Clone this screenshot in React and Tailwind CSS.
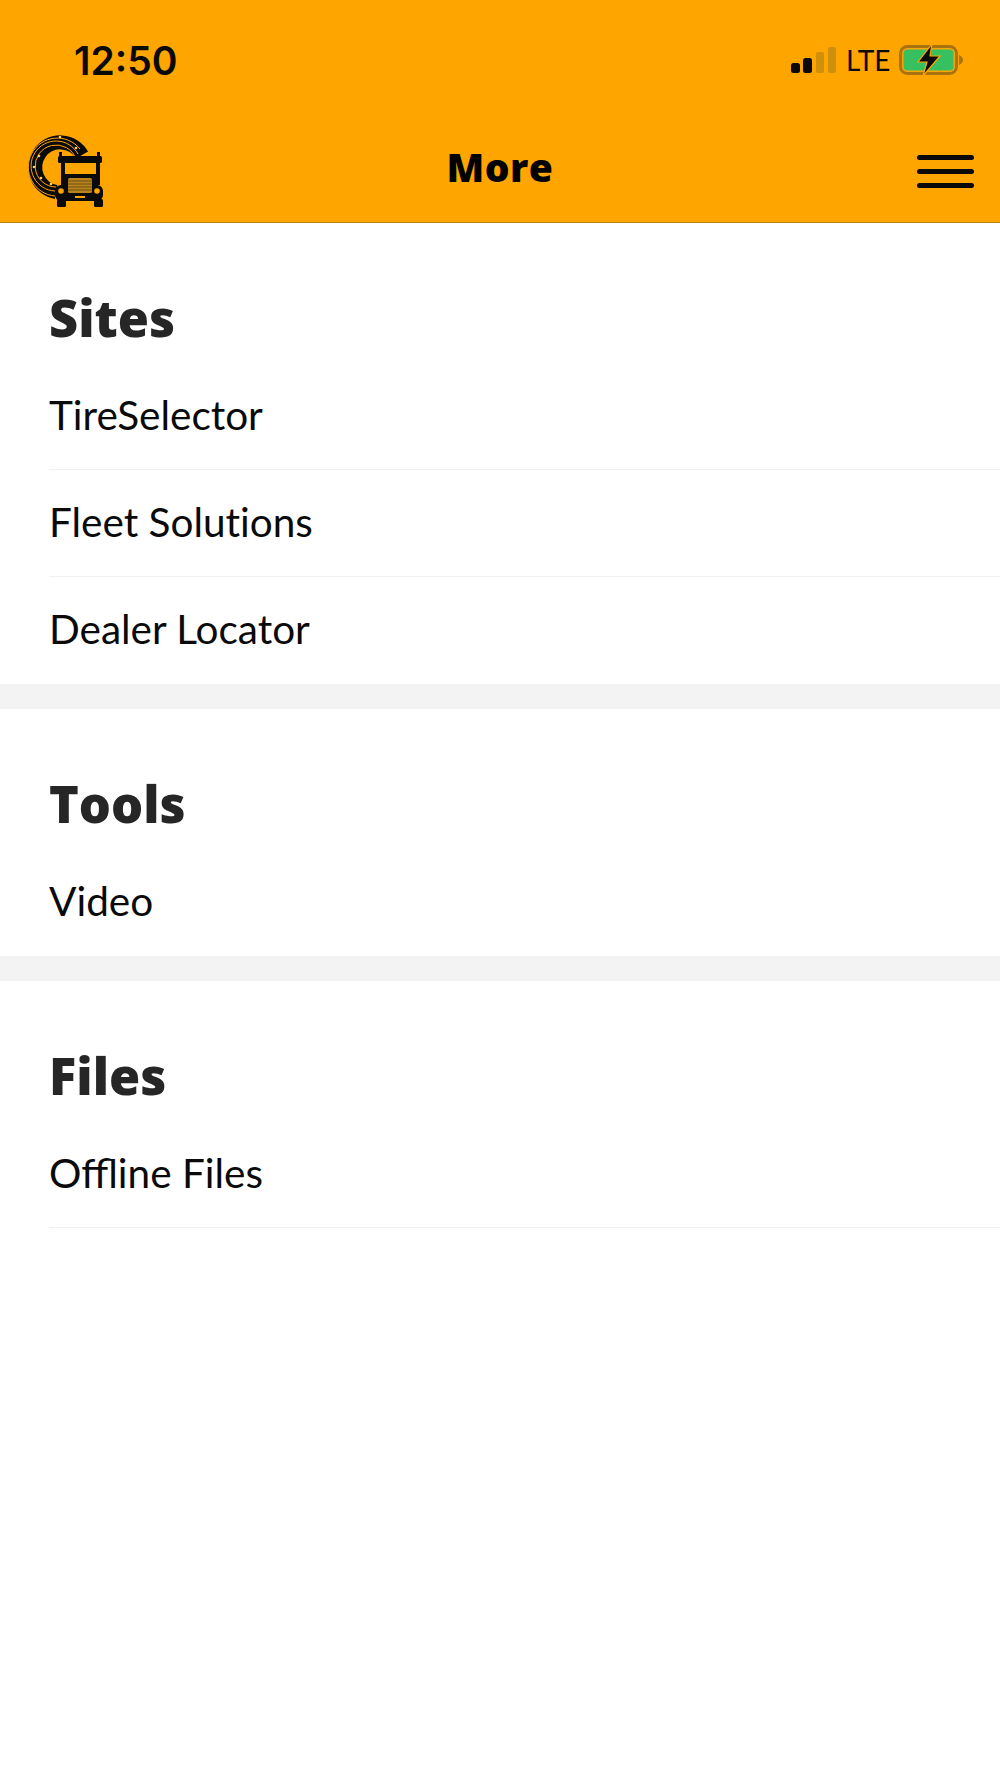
import React from "react";

const SECTIONS = [
  { title: "Sites", items: ["TireSelector", "Fleet Solutions", "Dealer Locator"] },
  { title: "Tools", items: ["Video"] },
  { title: "Files", items: ["Offline Files"] },
];

function TruckLogo() {
  return (
    <svg width="80" height="78" viewBox="0 0 80 78" className="block">
      {/* tire track arc */}
      <path d="M56 25 A 25 25 0 1 0 30 62" fill="none" stroke="#0a0a0a" strokeWidth="14" />
      <path d="M54 19 A 29 29 0 1 0 29 66" fill="none" stroke="#ffa500" strokeWidth="1" />
      <path d="M52 24 A 25 25 0 1 0 29 61" fill="none" stroke="#ffa500" strokeWidth="1" />
      <path d="M50 29 A 21 21 0 1 0 30 57" fill="none" stroke="#ffa500" strokeWidth="1" />
      <circle cx="34" cy="7" r="1.300" fill="#ffd060" />
      <circle cx="50" cy="18" r="1.300" fill="#ffd060" />
      <circle cx="13" cy="26" r="1.300" fill="#ffd060" />
      <circle cx="15" cy="48" r="1.300" fill="#ffd060" />
      <circle cx="25" cy="54" r="1.300" fill="#ffd060" />
      <circle cx="8" cy="37" r="1.300" fill="#ffd060" />
      {/* truck */}
      <rect x="33" y="22" width="3" height="6" fill="#0a0a0a" />
      <rect x="71" y="22" width="3" height="6" fill="#0a0a0a" />
      <rect x="32" y="26" width="44" height="7" rx="1.500" fill="#0a0a0a" />
      <rect x="35" y="33" width="4" height="22" fill="#0a0a0a" />
      <rect x="70" y="33" width="4" height="22" fill="#0a0a0a" />
      <rect x="36" y="44" width="36" height="26" fill="#0a0a0a" />
      <rect x="29" y="55" width="48" height="16" rx="6" fill="#0a0a0a" />
      <rect x="42" y="48" width="24" height="15" rx="1.500" fill="#b8841b" />
      <path d="M42 51h24M42 54h24M42 57h24M42 60h24" stroke="#5a4312" strokeWidth="0.8" />
      <circle cx="35" cy="61" r="2.800" fill="#ffa500" />
      <circle cx="71" cy="61" r="2.800" fill="#ffa500" />
      <rect x="49" y="66" width="10" height="2" fill="#ffa500" />
      <rect x="31" y="69" width="9" height="8" rx="1.500" fill="#0a0a0a" />
      <rect x="68" y="69" width="9" height="8" rx="1.500" fill="#0a0a0a" />
    </svg>
  );
}

function StatusIcons() {
  return (
    <div className="flex items-center">
      <svg width="46" height="26" viewBox="0 0 46 26" className="block">
        <rect x="0" y="16" width="9" height="10" rx="2.500" fill="#0a0a0a" />
        <rect x="12" y="11" width="9" height="15" rx="2.500" fill="#0a0a0a" />
        <rect x="25" y="5" width="8" height="21" rx="2" fill="#cf8f0a" />
        <rect x="37" y="0" width="8" height="26" rx="2" fill="#cf8f0a" />
      </svg>
      <span className="ml-[9px] w-[44px] text-[28px] leading-none text-[#0a0a0a] font-['Lato',sans-serif]">LTE</span>
      <svg width="64" height="32" viewBox="0 0 64 32" className="block ml-[9px]">
        <rect x="1.500" y="2.500" width="56" height="27" rx="7" fill="none" stroke="#a8720e" strokeWidth="3" />
        <rect x="4.500" y="5.500" width="50" height="21" rx="4" fill="#36c060" />
        <path d="M60 11 Q64 13 64 16 Q64 19 60 21 Z" fill="#a8720e" />
        <path d="M33 0 L19 18 H28 L24 32 L41 12 H31 Z" fill="#0a0a0a" stroke="#ffa500" strokeWidth="1.200" />
      </svg>
    </div>
  );
}

function Header() {
  return (
    <header className="h-[223px] bg-[#ffa500] border-b border-[#b98514] flex flex-col">
      <div className="flex items-center justify-between h-[120px] pl-[74px] pr-[37px]">
        <span className="text-[39px] leading-none text-[#0a0a0a] font-['Inter',sans-serif] font-semibold">12:50</span>
        <StatusIcons />
      </div>
      <div className="flex-1 flex items-start justify-between pl-[26px] pr-[26px] pt-[10px] relative">
        <TruckLogo />
        <h1 className="absolute left-0 right-0 top-[23px] text-center text-[39px] leading-[48px] font-extrabold tracking-[0.5px] text-black font-['Open_Sans',sans-serif]">More</h1>
        <div className="mt-[25px] flex flex-col gap-[9px]">
          <div className="w-[57px] h-[5px] rounded-full bg-[#0a0a0a]" />
          <div className="w-[57px] h-[5px] rounded-full bg-[#0a0a0a]" />
          <div className="w-[57px] h-[5px] rounded-full bg-[#0a0a0a]" />
        </div>
      </div>
    </header>
  );
}

function Section({ title, items, last }) {
  return (
    <section className={last ? "pl-[49px]" : "pl-[49px] border-b-[25px] border-[#f3f3f3]"}>
      <h2 className="pt-[65px] h-[140px] text-[50.500px] leading-[60px] font-extrabold text-[#262626] font-['Open_Sans',sans-serif]">{title}</h2>
      {items.map((label, i) => (
        <div
          key={label}
          className={`h-[107px] pb-[2px] flex items-center text-[40.500px] text-[#0a0a0a] font-['Lato',sans-serif] ${label === "Offline Files" ? "" : "[font-variant-ligatures:none]"} ${i === items.length - 1 && !last ? "" : "border-b border-[#f1f1f1]"}`}
        >
          {label}
        </div>
      ))}
    </section>
  );
}

export default function App() {
  return (
    <div className="w-[1000px] h-[1778px] bg-white overflow-hidden">
      <Header />
      {SECTIONS.map((s, i) => (
        <Section key={s.title} title={s.title} items={s.items} last={i === SECTIONS.length - 1} />
      ))}
    </div>
  );
}
